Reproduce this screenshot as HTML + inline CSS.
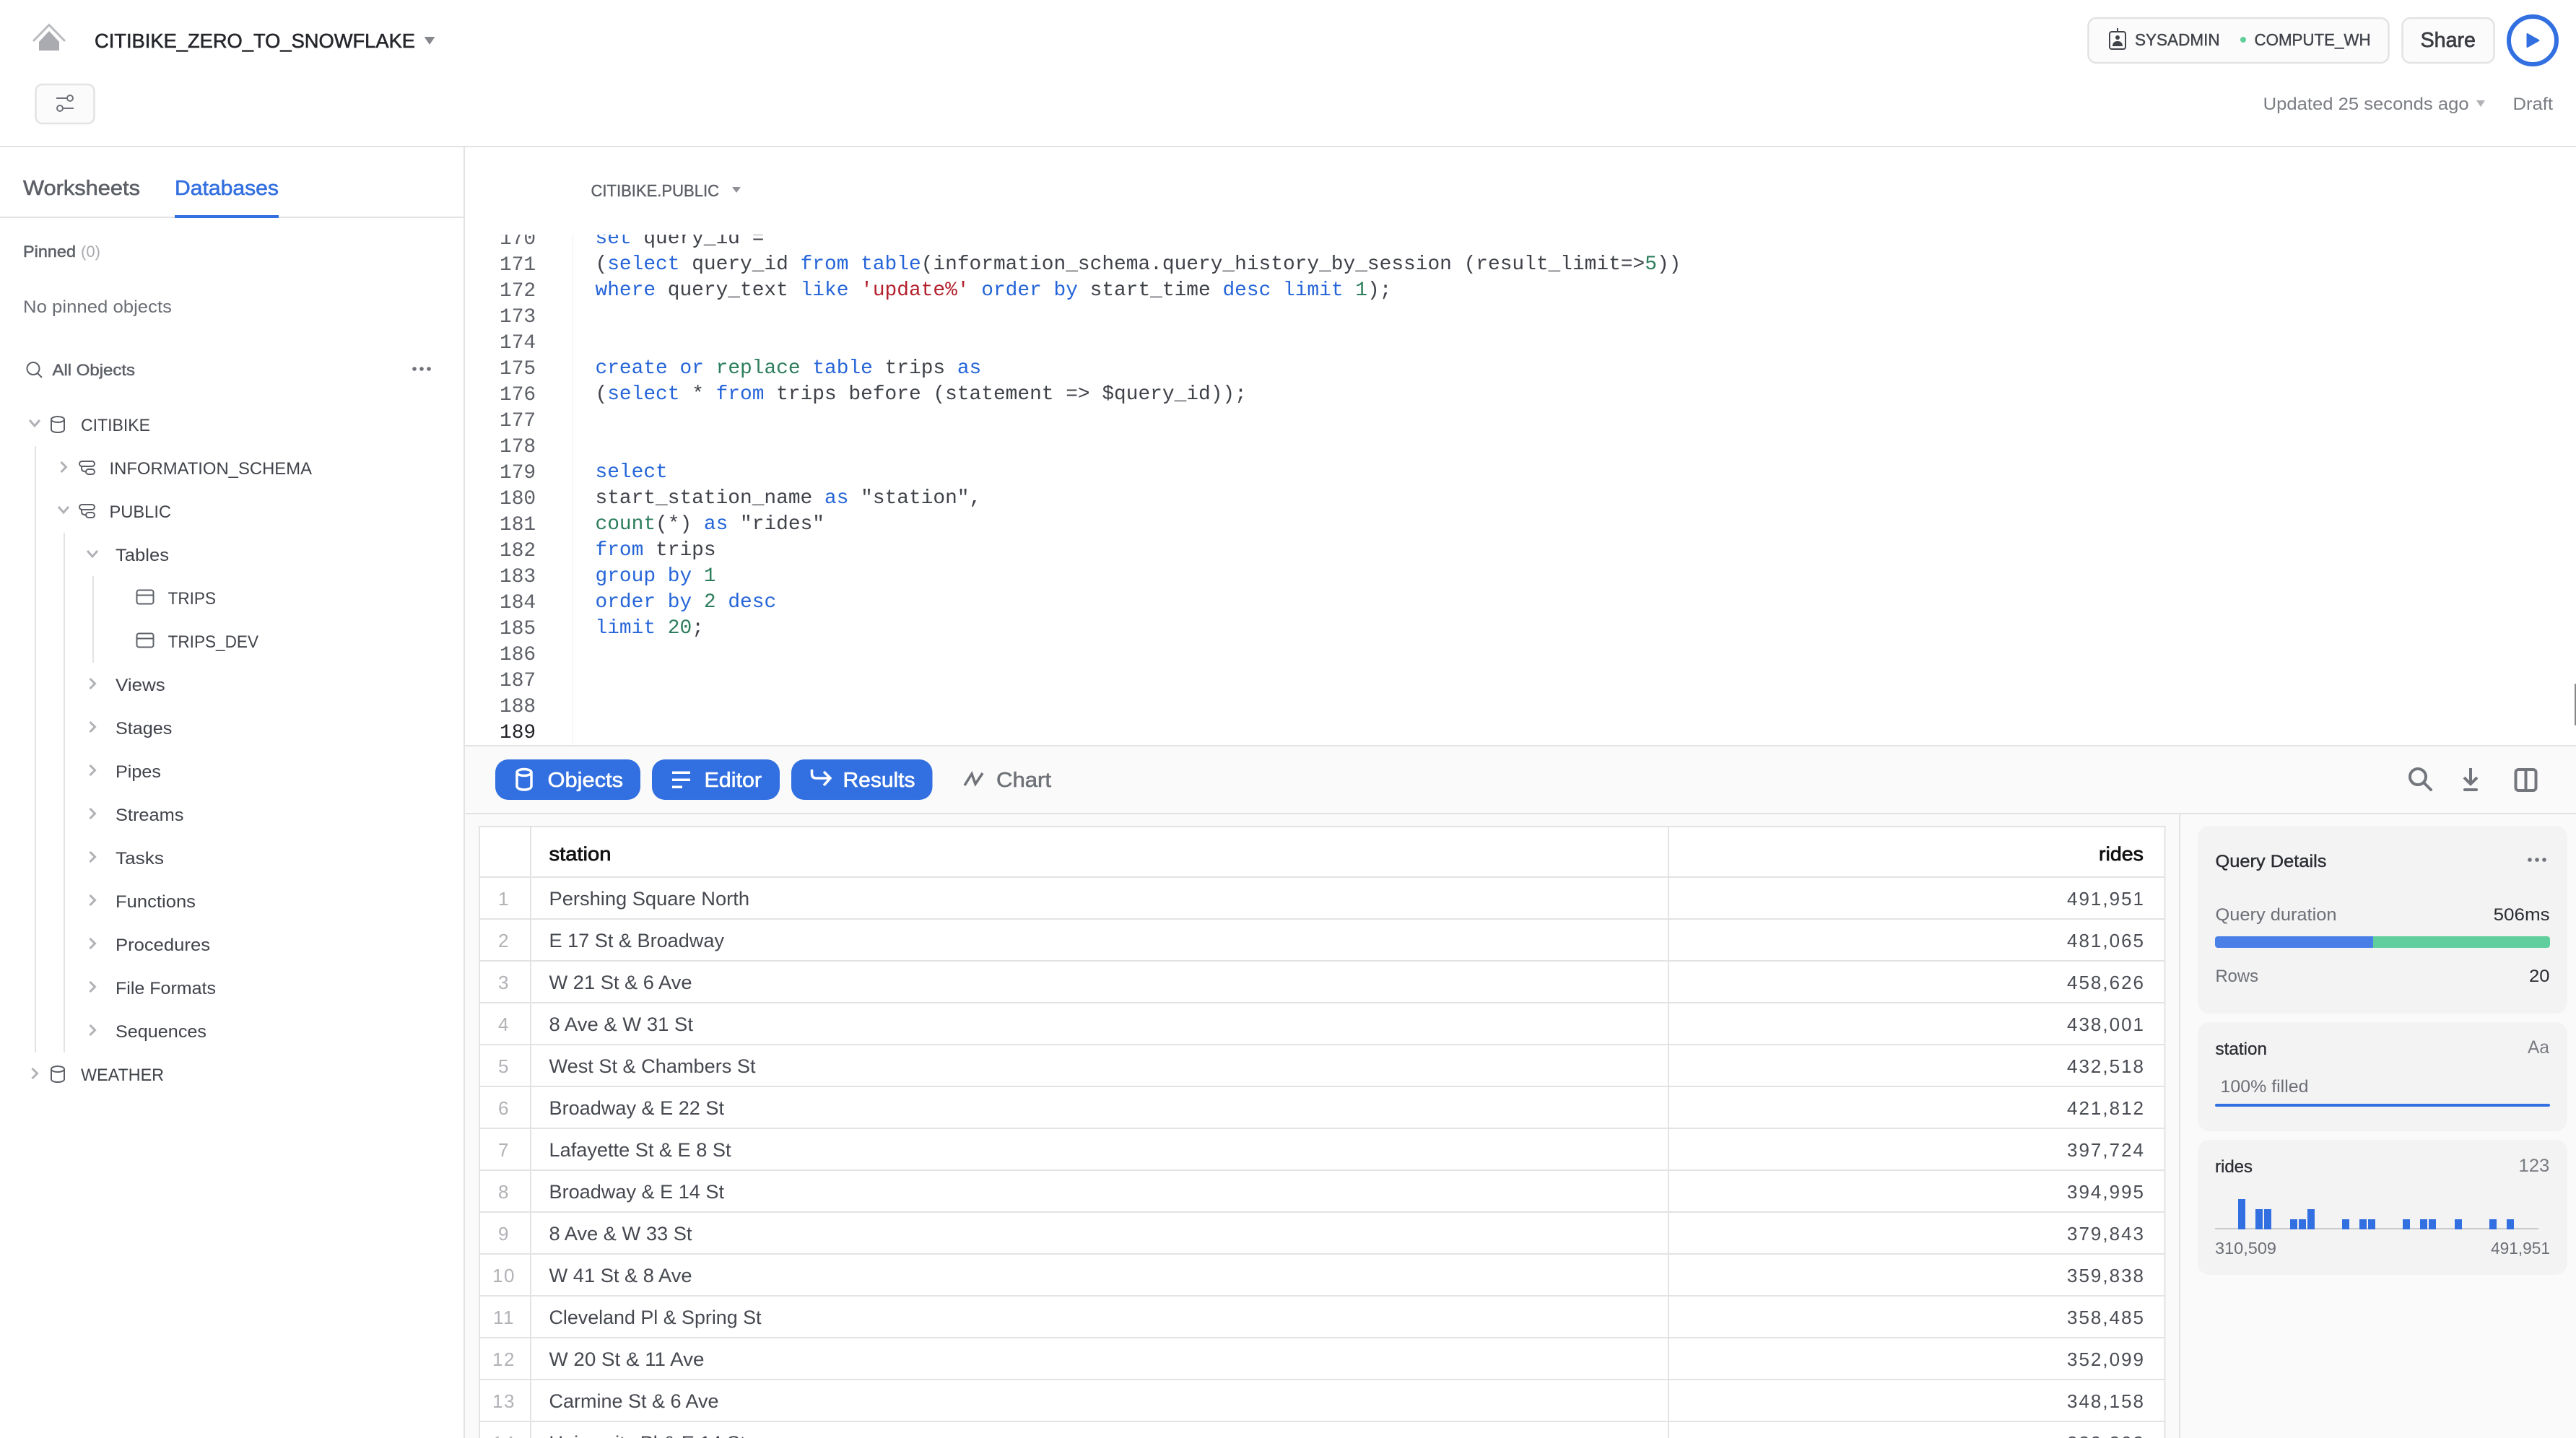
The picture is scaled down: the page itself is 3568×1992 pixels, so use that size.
<!DOCTYPE html>
<html lang="en"><head><meta charset="utf-8"><title>CITIBIKE_ZERO_TO_SNOWFLAKE</title>
<style>
html,body{margin:0;padding:0;background:#fff;width:3568px;height:1992px;overflow:hidden}
svg{display:block;font-family:"Liberation Sans",sans-serif}
text{white-space:pre}
.code text,.ln text{font-family:"Liberation Mono",monospace;font-size:27.85px}
.code text{fill:#3f4249}
.k{fill:#2565d8}.s{fill:#b3202c}.f{fill:#2c7d5c}
.ic{fill:none;stroke:#5d6067;stroke-width:2}
.ch{fill:none;stroke:#b0b2b6;stroke-width:3}
.tree text{font-size:24px;fill:#40434a}
.tb text{font-size:26.5px;fill:#45484f}
.idx text{font-size:26px;fill:#b0b2b6;text-anchor:middle;letter-spacing:1.5px}
.val text{font-size:26px;fill:#4a4d54;text-anchor:end;letter-spacing:2px}
.p text{font-size:24.5px;fill:#6c6f76}
.bar rect{fill:#326fe0;width:10px}
</style></head><body>
<svg width="3568" height="1992" viewBox="0 0 3568 1992" xmlns="http://www.w3.org/2000/svg">
<defs><clipPath id="c"><rect x="644" y="325" width="2924" height="706"/></clipPath></defs>
<rect width="3568" height="1992" fill="#fff"/>
<!-- results backdrop -->
<rect x="644" y="1033" width="2924" height="959" fill="#fafafa"/>
<!-- structural lines -->
<rect x="0" y="202" width="3568" height="2" fill="#e3e3e5"/>
<rect x="642" y="204" width="2" height="1788" fill="#e3e3e5"/>
<rect x="0" y="300" width="642" height="2" fill="#e3e3e5"/>
<rect x="242" y="298" width="144" height="4" fill="#326fe0"/>
<rect x="644" y="1032" width="2924" height="2" fill="#e3e3e5"/>
<rect x="644" y="1126" width="2924" height="2" fill="#e3e3e5"/>
<rect x="3018" y="1128" width="2" height="864" fill="#e3e3e5"/>
<rect x="793" y="324" width="1" height="708" fill="#f0f0f1"/>
<rect x="3566" y="947" width="2" height="58" rx="1" fill="#888"/>

<!-- header left -->
<path d="M46 57 68 34.500 90 57" fill="none" stroke="#b9bbbf" stroke-width="3"/>
<path d="M68 43 54 58V70H82V58Z" fill="#a9abb0"/>
<text x="131" y="66" font-size="28" textLength="444" lengthAdjust="spacingAndGlyphs" fill="#24262b" stroke="#24262b" stroke-width=".6">CITIBIKE_ZERO_TO_SNOWFLAKE</text>
<path d="M588.500 51.500H601.500L595 61Z" fill="#85878c" stroke="#85878c" stroke-linejoin="round"/>
<rect x="49.500" y="117" width="81" height="54" rx="9" fill="#fbfbfb" stroke="#e3e3e5" stroke-width="2.500"/>
<g fill="none" stroke="#6f7279" stroke-width="2"><path d="M78 136H93"/><circle cx="97" cy="136" r="4"/><circle cx="83" cy="150" r="4"/><path d="M87 150H102"/></g>

<!-- header right -->
<rect x="2892.500" y="25" width="416" height="62" rx="11" fill="#fbfbfb" stroke="#e3e3e5" stroke-width="2.500"/>
<g fill="none" stroke="#40434a" stroke-width="2"><rect x="2922" y="44" width="22" height="24" rx="3"/><path d="M2933 39V44"/></g>
<circle cx="2933" cy="52" r="3" fill="#40434a"/><path d="M2926 64c0-5 3-7 7-7s7 2 7 7Z" fill="#40434a"/>
<text x="2957" y="63" font-size="23" textLength="117.600" lengthAdjust="spacingAndGlyphs" fill="#40434a" stroke="#40434a" stroke-width=".4">SYSADMIN</text>
<circle cx="3107" cy="55" r="4" fill="#60cf9d"/>
<text x="3122.500" y="63" font-size="23" textLength="161.100" lengthAdjust="spacingAndGlyphs" fill="#40434a" stroke="#40434a" stroke-width=".4">COMPUTE_WH</text>
<rect x="3327.500" y="25" width="127" height="62" rx="11" fill="#fbfbfb" stroke="#e3e3e5" stroke-width="2.500"/>
<text x="3352.600" y="65" font-size="28.500" textLength="76.400" lengthAdjust="spacingAndGlyphs" fill="#3a3c42" stroke="#3a3c42" stroke-width=".7">Share</text>
<circle cx="3508" cy="56" r="33" fill="#fff" stroke="#326fe0" stroke-width="6"/>
<path d="M3500.500 47 3516.500 56 3500.500 65Z" fill="#326fe0" stroke="#326fe0" stroke-width="2" stroke-linejoin="round"/>
<text x="3134.600" y="152" font-size="24.500" textLength="285" lengthAdjust="spacingAndGlyphs" fill="#7a7d83">Updated 25 seconds ago</text>
<path d="M3430 139H3442L3436 148Z" fill="#b0b2b6"/>
<text x="3480.500" y="152" font-size="24.500" textLength="55.500" lengthAdjust="spacingAndGlyphs" fill="#7a7d83">Draft</text>

<!-- sidebar top -->
<text x="32" y="270" font-size="28.500" textLength="162" lengthAdjust="spacingAndGlyphs" fill="#5d6067" stroke="#5d6067" stroke-width=".6">Worksheets</text>
<text x="242" y="270" font-size="28.500" textLength="144" lengthAdjust="spacingAndGlyphs" fill="#326fe0" stroke="#326fe0" stroke-width=".6">Databases</text>
<text x="32" y="356" font-size="22" textLength="73" lengthAdjust="spacingAndGlyphs" fill="#5d6067" stroke="#5d6067" stroke-width=".5">Pinned</text>
<text x="112" y="356" font-size="22" textLength="27" lengthAdjust="spacingAndGlyphs" fill="#a8aaae">(0)</text>
<text x="32" y="433" font-size="24.500" textLength="206" lengthAdjust="spacingAndGlyphs" fill="#6b6e75">No pinned objects</text>
<circle cx="46" cy="510.500" r="8.500" class="ic"/><path d="M52 517 58 523" class="ic"/>
<text x="72.500" y="520" font-size="22.500" textLength="114.500" lengthAdjust="spacingAndGlyphs" fill="#5d6067" stroke="#5d6067" stroke-width=".5">All Objects</text>
<g fill="#6f7279"><circle cx="574" cy="511" r="2.800"/><circle cx="584" cy="511" r="2.800"/><circle cx="594" cy="511" r="2.800"/></g>

<!-- tree guides -->
<g fill="#e3e3e5"><rect x="48" y="618" width="2" height="840"/><rect x="88" y="738" width="2" height="720"/><rect x="128" y="798" width="2" height="120"/></g>
<!-- tree chevrons -->
<g class="ch">
<path d="M41 582 48 590 55 582"/>
<path d="M84.500 640 91.500 647 84.500 654"/>
<path d="M81 702 88 710 95 702"/>
<path d="M121 763 128 771 135 763"/>
<path d="M124.500 940 131.500 947 124.500 954"/>
<path d="M124.500 1000 131.500 1007 124.500 1014"/>
<path d="M124.500 1060 131.500 1067 124.500 1074"/>
<path d="M124.500 1120 131.500 1127 124.500 1134"/>
<path d="M124.500 1180 131.500 1187 124.500 1194"/>
<path d="M124.500 1240 131.500 1247 124.500 1254"/>
<path d="M124.500 1300 131.500 1307 124.500 1314"/>
<path d="M124.500 1360 131.500 1367 124.500 1374"/>
<path d="M124.500 1420 131.500 1427 124.500 1434"/>
<path d="M44.500 1480 51.500 1487 44.500 1494"/>
</g>
<!-- tree icons -->
<g class="ic">
<path d="M71 581v14c0 2.500 4 4 9 4s9-1.500 9-4v-14"/><ellipse cx="80" cy="581" rx="9" ry="4"/>
<path d="M71 1481v14c0 2.500 4 4 9 4s9-1.500 9-4v-14"/><ellipse cx="80" cy="1481" rx="9" ry="4"/>
<rect x="110" y="639" width="21" height="7" rx="3.500"/><rect x="119" y="650" width="12" height="7" rx="3.500"/><path d="M113 646v3q0 4 6 4.500"/>
<rect x="110" y="699" width="21" height="7" rx="3.500"/><rect x="119" y="710" width="12" height="7" rx="3.500"/><path d="M113 706v3q0 4 6 4.500"/>
<rect x="189.500" y="817.500" width="23" height="19" rx="3"/><path d="M189.500 824.500H212.500"/>
<rect x="189.500" y="877.500" width="23" height="19" rx="3"/><path d="M189.500 884.500H212.500"/>
</g>
<!-- tree labels -->
<g class="tree">
<text x="112" y="597" textLength="96" lengthAdjust="spacingAndGlyphs">CITIBIKE</text>
<text x="151.500" y="657" textLength="280.500" lengthAdjust="spacingAndGlyphs">INFORMATION_SCHEMA</text>
<text x="151.500" y="717" textLength="85.500" lengthAdjust="spacingAndGlyphs">PUBLIC</text>
<text x="160" y="777" textLength="74" lengthAdjust="spacingAndGlyphs">Tables</text>
<text x="232.600" y="837" textLength="66.400" lengthAdjust="spacingAndGlyphs">TRIPS</text>
<text x="232.600" y="897" textLength="125.400" lengthAdjust="spacingAndGlyphs">TRIPS_DEV</text>
<text x="160" y="957" textLength="68.800" lengthAdjust="spacingAndGlyphs">Views</text>
<text x="160" y="1017" textLength="78.400" lengthAdjust="spacingAndGlyphs">Stages</text>
<text x="160" y="1077" textLength="63" lengthAdjust="spacingAndGlyphs">Pipes</text>
<text x="160" y="1137" textLength="94.500" lengthAdjust="spacingAndGlyphs">Streams</text>
<text x="160" y="1197" textLength="67" lengthAdjust="spacingAndGlyphs">Tasks</text>
<text x="160" y="1257" textLength="111" lengthAdjust="spacingAndGlyphs">Functions</text>
<text x="160" y="1317" textLength="131" lengthAdjust="spacingAndGlyphs">Procedures</text>
<text x="160" y="1377" textLength="139" lengthAdjust="spacingAndGlyphs">File Formats</text>
<text x="160" y="1437" textLength="126" lengthAdjust="spacingAndGlyphs">Sequences</text>
<text x="112" y="1497" textLength="115" lengthAdjust="spacingAndGlyphs">WEATHER</text>
</g>

<!-- editor -->
<text x="818.500" y="272" font-size="23.500" textLength="177.500" lengthAdjust="spacingAndGlyphs" fill="#5d6067" stroke="#5d6067" stroke-width=".4">CITIBIKE.PUBLIC</text>
<path d="M1014 259H1026L1020 267Z" fill="#8f9196"/>
<g clip-path="url(#c)">
<g class="ln" fill="#5d6067">
<text x="692" y="338">170</text><text x="692" y="374">171</text><text x="692" y="410">172</text><text x="692" y="446">173</text><text x="692" y="482">174</text><text x="692" y="518">175</text><text x="692" y="554">176</text><text x="692" y="590">177</text><text x="692" y="626">178</text><text x="692" y="662">179</text><text x="692" y="698">180</text><text x="692" y="734">181</text><text x="692" y="770">182</text><text x="692" y="806">183</text><text x="692" y="842">184</text><text x="692" y="878">185</text><text x="692" y="914">186</text><text x="692" y="950">187</text><text x="692" y="986">188</text><text x="692" y="1022" fill="#1f2126">189</text>
</g>
<g class="code">
<text x="824.500" y="337"><tspan class="k">set</tspan> query_id =</text>
<text x="824.500" y="373">(<tspan class="k">select</tspan> query_id <tspan class="k">from</tspan> <tspan class="k">table</tspan>(information_schema.query_history_by_session (result_limit=&gt;<tspan class="f">5</tspan>))</text>
<text x="824.500" y="409"><tspan class="k">where</tspan> query_text <tspan class="k">like</tspan> <tspan class="s">'update%'</tspan> <tspan class="k">order</tspan> <tspan class="k">by</tspan> start_time <tspan class="k">desc</tspan> <tspan class="k">limit</tspan> <tspan class="f">1</tspan>);</text>
<text x="824.500" y="517"><tspan class="k">create</tspan> <tspan class="k">or</tspan> <tspan class="f">replace</tspan> <tspan class="k">table</tspan> trips <tspan class="k">as</tspan></text>
<text x="824.500" y="553">(<tspan class="k">select</tspan> * <tspan class="k">from</tspan> trips before (statement =&gt; $query_id));</text>
<text x="824.500" y="661"><tspan class="k">select</tspan></text>
<text x="824.500" y="697">start_station_name <tspan class="k">as</tspan> "station",</text>
<text x="824.500" y="733"><tspan class="f">count</tspan>(*) <tspan class="k">as</tspan> "rides"</text>
<text x="824.500" y="769"><tspan class="k">from</tspan> trips</text>
<text x="824.500" y="805"><tspan class="k">group</tspan> <tspan class="k">by</tspan> <tspan class="f">1</tspan></text>
<text x="824.500" y="841"><tspan class="k">order</tspan> <tspan class="k">by</tspan> <tspan class="f">2</tspan> <tspan class="k">desc</tspan></text>
<text x="824.500" y="877"><tspan class="k">limit</tspan> <tspan class="f">20</tspan>;</text>
</g>
</g>

<!-- toolbar -->
<g fill="#326fe0"><rect x="686" y="1052" width="201" height="56" rx="18"/><rect x="903" y="1052" width="177" height="56" rx="18"/><rect x="1096" y="1052" width="195.500" height="56" rx="18"/></g>
<g fill="none" stroke="#fff" stroke-width="3.500">
<ellipse cx="726" cy="1070" rx="10" ry="4.500"/><path d="M716 1070v19c0 3 4.500 5 10 5s10-2 10-5v-19"/>
<path d="M1124.500 1066v6q0 6 6 6h19M1141 1069l9 9-9 10"/>
</g>
<g fill="#fff"><rect x="931" y="1068.500" width="25" height="3.500"/><rect x="931" y="1078.500" width="25" height="3.500"/><rect x="931" y="1088.500" width="14" height="3.500"/></g>
<g font-size="28.500" fill="#fff" stroke="#fff" stroke-width=".6">
<text x="758.500" y="1090" textLength="104.500" lengthAdjust="spacingAndGlyphs">Objects</text>
<text x="975.500" y="1090" textLength="79.500" lengthAdjust="spacingAndGlyphs">Editor</text>
<text x="1167.500" y="1090" textLength="100" lengthAdjust="spacingAndGlyphs">Results</text>
</g>
<path d="M1336 1088 1346 1072 1351 1086 1361 1071" fill="none" stroke="#6f7279" stroke-width="3.500"/>
<text x="1380" y="1090" font-size="28.500" textLength="76" lengthAdjust="spacingAndGlyphs" fill="#6f7279" stroke="#6f7279" stroke-width=".6">Chart</text>
<g fill="none" stroke="#73767c" stroke-width="4">
<circle cx="3349" cy="1076" r="11"/><path d="M3357 1084 3367 1094" stroke-linecap="round"/>
<path d="M3422 1064V1085M3413 1077 3422 1086 3431 1077"/><path d="M3414 1094H3430" stroke-linecap="round"/>
<rect x="3484.500" y="1066" width="28" height="29" rx="4"/><path d="M3498.500 1066V1095"/>
</g>

<!-- table -->
<rect x="663" y="1145" width="2336" height="847" fill="#fff"/>
<path d="M663 1145H2999M663 1215H2999M663 1273H2999M663 1331H2999M663 1389H2999M663 1447H2999M663 1505H2999M663 1563H2999M663 1621H2999M663 1679H2999M663 1737H2999M663 1795H2999M663 1853H2999M663 1911H2999M663 1969H2999M664 1144V1992M735 1144V1992M2311 1144V1992M2998.500 1144V1992" fill="none" stroke="#e3e3e5" stroke-width="2"/>
<text x="760.500" y="1192" font-size="26.500" textLength="86" lengthAdjust="spacingAndGlyphs" fill="#111" stroke="#111" stroke-width=".7">station</text>
<text x="2907" y="1192" font-size="26.500" textLength="62" lengthAdjust="spacingAndGlyphs" fill="#111" stroke="#111" stroke-width=".7">rides</text>
<g class="tb">
<text x="760.500" y="1254" textLength="277.500" lengthAdjust="spacingAndGlyphs">Pershing Square North</text>
<text x="760.500" y="1312" textLength="242.500" lengthAdjust="spacingAndGlyphs">E 17 St &amp; Broadway</text>
<text x="760.500" y="1370" textLength="198" lengthAdjust="spacingAndGlyphs">W 21 St &amp; 6 Ave</text>
<text x="760.500" y="1428" textLength="199.500" lengthAdjust="spacingAndGlyphs">8 Ave &amp; W 31 St</text>
<text x="760.500" y="1486" textLength="286" lengthAdjust="spacingAndGlyphs">West St &amp; Chambers St</text>
<text x="760.500" y="1544" textLength="242.500" lengthAdjust="spacingAndGlyphs">Broadway &amp; E 22 St</text>
<text x="760.500" y="1602" textLength="252" lengthAdjust="spacingAndGlyphs">Lafayette St &amp; E 8 St</text>
<text x="760.500" y="1660" textLength="242.500" lengthAdjust="spacingAndGlyphs">Broadway &amp; E 14 St</text>
<text x="760.500" y="1718" textLength="198" lengthAdjust="spacingAndGlyphs">8 Ave &amp; W 33 St</text>
<text x="760.500" y="1776" textLength="198" lengthAdjust="spacingAndGlyphs">W 41 St &amp; 8 Ave</text>
<text x="760.500" y="1834" textLength="294" lengthAdjust="spacingAndGlyphs">Cleveland Pl &amp; Spring St</text>
<text x="760.500" y="1892" textLength="215" lengthAdjust="spacingAndGlyphs">W 20 St &amp; 11 Ave</text>
<text x="760.500" y="1950" textLength="235" lengthAdjust="spacingAndGlyphs">Carmine St &amp; 6 Ave</text>
<text x="760.500" y="2008" textLength="272" lengthAdjust="spacingAndGlyphs">University Pl &amp; E 14 St</text>
</g>
<g class="idx">
<text x="698" y="1254">1</text><text x="698" y="1312">2</text><text x="698" y="1370">3</text><text x="698" y="1428">4</text><text x="698" y="1486">5</text><text x="698" y="1544">6</text><text x="698" y="1602">7</text><text x="698" y="1660">8</text><text x="698" y="1718">9</text><text x="698" y="1776">10</text><text x="698" y="1834">11</text><text x="698" y="1892">12</text><text x="698" y="1950">13</text><text x="698" y="2008">14</text>
</g>
<g class="val">
<text x="2971" y="1254">491,951</text><text x="2971" y="1312">481,065</text><text x="2971" y="1370">458,626</text><text x="2971" y="1428">438,001</text><text x="2971" y="1486">432,518</text><text x="2971" y="1544">421,812</text><text x="2971" y="1602">397,724</text><text x="2971" y="1660">394,995</text><text x="2971" y="1718">379,843</text><text x="2971" y="1776">359,838</text><text x="2971" y="1834">358,485</text><text x="2971" y="1892">352,099</text><text x="2971" y="1950">348,158</text><text x="2971" y="2008">339,303</text>
</g>

<!-- details panel -->
<g fill="#f3f3f4"><rect x="3044" y="1144" width="512" height="260" rx="16"/><rect x="3044" y="1416" width="512" height="151" rx="16"/><rect x="3044" y="1579" width="512" height="187" rx="16"/></g>
<text x="3068.500" y="1201" font-size="24.500" textLength="154" lengthAdjust="spacingAndGlyphs" fill="#2a2c31" stroke="#2a2c31" stroke-width=".4">Query Details</text>
<g fill="#6f7279"><circle cx="3504" cy="1191" r="2.800"/><circle cx="3514" cy="1191" r="2.800"/><circle cx="3524" cy="1191" r="2.800"/></g>
<g class="p">
<text x="3068.500" y="1275" textLength="168" lengthAdjust="spacingAndGlyphs">Query duration</text>
<text x="3453.600" y="1275" textLength="78" lengthAdjust="spacingAndGlyphs" style="fill:#2a2c31">506ms</text>
<text x="3068.500" y="1360" textLength="59.500" lengthAdjust="spacingAndGlyphs">Rows</text>
<text x="3503" y="1360" textLength="28.500" lengthAdjust="spacingAndGlyphs" style="fill:#2a2c31">20</text>
<text x="3068.500" y="1461" textLength="71.500" lengthAdjust="spacingAndGlyphs" style="fill:#2a2c31;stroke:#2a2c31;stroke-width:.3px">station</text>
<text x="3075.500" y="1513" textLength="122" lengthAdjust="spacingAndGlyphs">100% filled</text>
<text x="3068" y="1624" textLength="52" lengthAdjust="spacingAndGlyphs" style="fill:#2a2c31;stroke:#2a2c31;stroke-width:.3px">rides</text>
<text x="3068" y="1737" textLength="85" lengthAdjust="spacingAndGlyphs" style="font-size:23px">310,509</text>
<text x="3450" y="1737" textLength="82" lengthAdjust="spacingAndGlyphs" style="font-size:23px">491,951</text>
</g>
<text x="3501" y="1459" font-size="25" textLength="30" lengthAdjust="spacingAndGlyphs" fill="#7a7d83">Aa</text>
<text x="3488.400" y="1623" font-size="25" textLength="43" lengthAdjust="spacingAndGlyphs" fill="#7a7d83">123</text>
<path d="M3068 1301a4 4 0 0 1 4-4H3287V1313H3072a4 4 0 0 1-4-4Z" fill="#4a7fe8"/>
<path d="M3287 1297H3528a4 4 0 0 1 4 4V1309a4 4 0 0 1-4 4H3287Z" fill="#60cf9d"/>
<rect x="3068" y="1529" width="464" height="4" rx="2" fill="#326fe0"/>
<rect x="3068" y="1701" width="448" height="2" fill="#c8c9cd"/>
<g class="bar">
<rect x="3100" y="1661" height="42"/><rect x="3124" y="1675" height="28"/><rect x="3136" y="1675" height="28"/><rect x="3172" y="1689" height="14"/><rect x="3184" y="1689" height="14"/><rect x="3196" y="1675" height="28"/><rect x="3244" y="1689" height="14"/><rect x="3268" y="1689" height="14"/><rect x="3280" y="1689" height="14"/><rect x="3328" y="1689" height="14"/><rect x="3352" y="1689" height="14"/><rect x="3364" y="1689" height="14"/><rect x="3400" y="1689" height="14"/><rect x="3448" y="1689" height="14"/><rect x="3472" y="1689" height="14"/>
</g>
</svg>
</body></html>
